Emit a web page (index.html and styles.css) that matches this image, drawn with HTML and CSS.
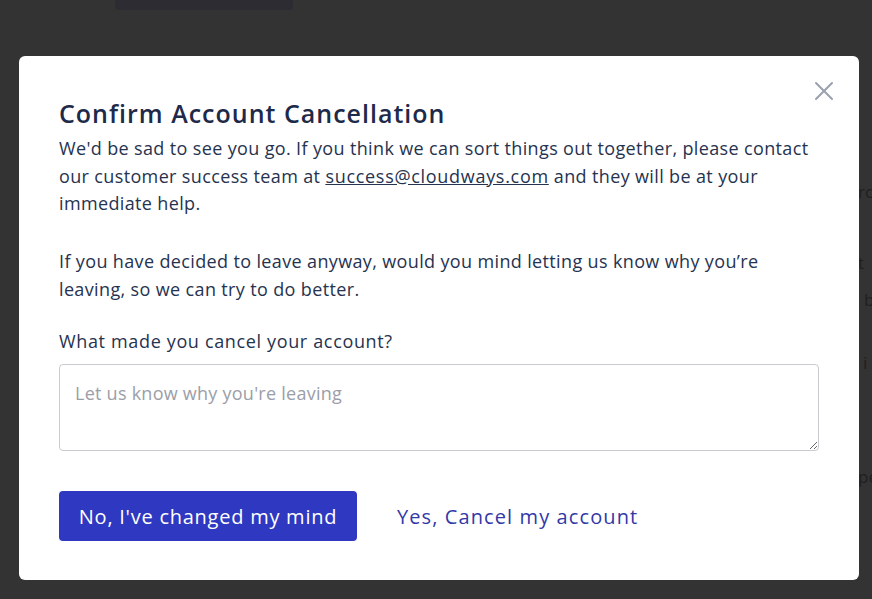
FILE: index.html
```html
<!DOCTYPE html>
<html>
<head>
<meta charset="utf-8">
<link rel="stylesheet" href="styles.css">
</head>
<body>
<div class="page">
  <div class="topbar"></div>
  <div class="side">
    <p class="l1">ro</p>
    <p class="l2">t</p>
    <p class="l3">b</p>
    <p class="l4">s, i</p>
    <p class="l5">pe</p>
  </div>
</div>
<div class="overlay">
  <div class="modal">
    <button class="close" aria-label="Close">
      <svg width="20" height="20" viewBox="0 0 20 20"><path d="M2 2L18 18M18 2L2 18" stroke="#9aa1ae" stroke-width="2" stroke-linecap="round"/></svg>
    </button>
    <h2 class="title">Confirm Account Cancellation</h2>
    <p class="text">We'd be sad to see you go. If you think we can sort things out together, please contact our customer success team at <a class="mail" href="#">success@cloudways.com</a> and they will be at your immediate help.</p>
    <p class="text gap">If you have decided to leave anyway, would you mind letting us know why you’re leaving, so we can try to do better.</p>
    <label class="label">What made you cancel your account?</label>
    <textarea class="reason" placeholder="Let us know why you're leaving"></textarea>
    <div class="actions">
      <button class="primary">No, I've changed my mind</button>
      <a class="link" href="#">Yes, Cancel my account</a>
    </div>
  </div>
</div>
</body>
</html>
```
FILE: styles.css
```css
html, body {
  margin: 0;
  height: 100%;
  background: #333333;
  font-family: "Open Sans", "Liberation Sans", sans-serif;
  overflow: hidden;
}
.page {
  position: relative;
  height: 100%;
}
.topbar {
  margin-left: 115px;
  width: 178px;
  height: 10px;
  background: #2d2c33;
  border-radius: 0 0 3px 3px;
}
.side {
  margin-left: 858px;
  color: #1f1f1f;
  font-size: 17px;
  line-height: 24px;
}
.side p { margin: 0; white-space: nowrap; }
.side .l1 { margin-top: 170px; }
.side .l2 { margin-top: 47px; }
.side .l3 { margin-top: 13px; padding-left: 6px; }
.side .l4 { margin-top: 39px; margin-left: -12px; }
.side .l5 { margin-top: 90px; }
.overlay {
  position: fixed;
  inset: 0;
  padding: 56px 13px 19px 19px;
  box-sizing: border-box;
}
.modal {
  position: relative;
  background: #ffffff;
  border-radius: 6px;
  width: 840px;
  height: 524px;
  box-sizing: border-box;
  padding: 40px 40px 39px 40px;
  display: flex;
  flex-direction: column;
  color: #26334f;
}
.close {
  position: absolute;
  top: 25px;
  right: 25px;
  width: 20px;
  height: 20px;
  padding: 0;
  border: 0;
  background: none;
  cursor: pointer;
}
.close svg { display: block; }
.title {
  margin: 0 0 5px;
  font-size: 25px;
  line-height: 34px;
  font-weight: 600;
  letter-spacing: 1px;
  color: #1d2a4a;
}
.text {
  margin: 0;
  font-size: 18px;
  line-height: 27.5px;
  letter-spacing: 0.36px;
}
.text.gap { margin-top: 30.5px; }
.mail { color: inherit; text-decoration: underline; letter-spacing: 0.7px; }
.label {
  margin-top: 24px;
  font-size: 18px;
  line-height: 28px;
  letter-spacing: 0.65px;
}
.reason {
  margin-top: 9px;
  width: 760px;
  height: 87px;
  box-sizing: border-box;
  border: 1px solid #c9cbd0;
  border-radius: 4px;
  padding: 16px 15px;
  font-family: inherit;
  font-size: 18px;
  letter-spacing: 0.25px;
  color: #26334f;
}
.reason::placeholder { color: #9b9ea8; }
.actions {
  margin-top: 40px;
  display: flex;
  align-items: center;
  gap: 40px;
}
.primary {
  width: 298px;
  height: 50px;
  border: 0;
  border-radius: 4px;
  background: #2e38c0;
  color: #ffffff;
  font-family: inherit;
  font-size: 20px;
  font-weight: 500;
  letter-spacing: 0.75px;
  cursor: pointer;
}
.link {
  color: #3238a8;
  font-size: 20px;
  letter-spacing: 1.1px;
  text-decoration: none;
}
```
